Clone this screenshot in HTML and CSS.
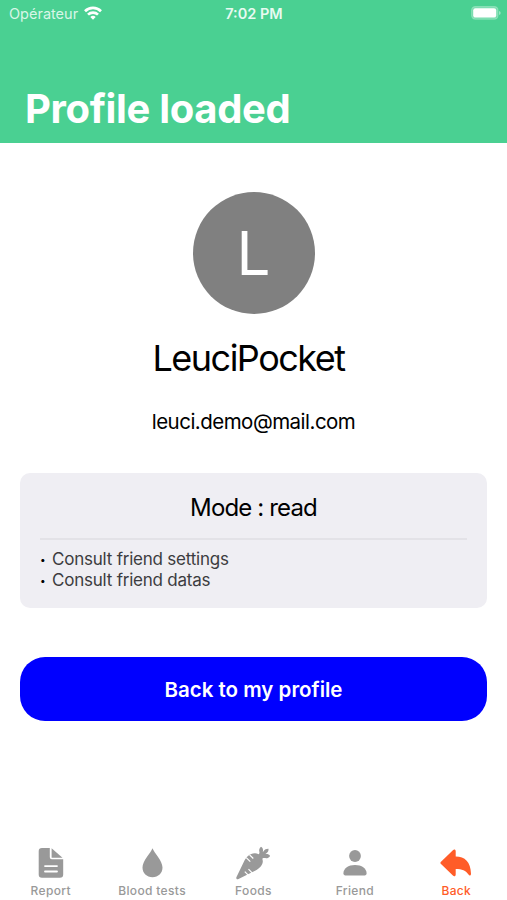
FILE: index.html
```html
<!DOCTYPE html>
<html lang="en">
<head>
  <meta charset="UTF-8" />
  <meta name="viewport" content="width=device-width, initial-scale=1.0"/>
  <title>Profile loaded</title>
  <link rel="stylesheet" href="styles.css">
</head>
<body>

  <header>
    <div class="status-bar">
      <div class="carrier">
        <span>Opérateur</span>
        <svg class="wifi" viewBox="0 0 18 14" fill="none" stroke="#fff" stroke-width="2.7">
          <path d="M1 5.2a11.5 11.5 0 0 1 16 0"/>
          <path d="M4 8.6a7.2 7.2 0 0 1 10 0"/>
          <path d="M9 13.7L6.3 11a3.9 3.9 0 0 1 5.4 0z" fill="#fff" stroke="none"/>
        </svg>
      </div>
      <span class="time">7:02 PM</span>
      <svg class="battery" viewBox="0 0 30 14">
        <rect x="0.6" y="0.6" width="26.4" height="12.6" rx="3.6" fill="#fff" fill-opacity="0.25" stroke="#fff" stroke-opacity="0.25" stroke-width="1.1"/>
        <rect x="2.2" y="2.2" width="23" height="9.4" rx="2.2" fill="#fff"/>
        <path d="M28.1 4.9q1.5.6 1.5 2t-1.5 2z" fill="#fff" fill-opacity="0.5"/>
      </svg>
    </div>
    <h1>Profile loaded</h1>
  </header>

  <main>
    <div class="avatar">L</div>
    <h2>LeuciPocket</h2>
    <p class="email">leuci.demo@mail.com</p>

    <section class="mode-card">
      <h3>Mode : read</h3>
      <ul>
        <li>Consult friend settings</li>
        <li>Consult friend datas</li>
      </ul>
    </section>

    <button class="blue">Back to my profile</button>
  </main>

  <!-- Tab bar -->
  <nav>
    <a class="tab">
      <svg viewBox="0 0 36 36">
        <path fill-rule="evenodd" d="M9 3h7.800v9.200a2 2 0 0 0 2 2h11.400v15.300a3.300 3.300 0 0 1-3.300 3.300H9a3.300 3.300 0 0 1-3.300-3.300V6.300A3.300 3.300 0 0 1 9 3zM12 20.200a.9.9 0 0 0 0 1.800h12a.9.9 0 0 0 0-1.800zM12 25.600a.9.9 0 0 0 0 1.800h12a.9.9 0 0 0 0-1.800z"/>
        <path d="M18.600 3.200l10.900 9.500H18.600z"/>
      </svg>
      <span>Report</span>
    </a>
    <a class="tab">
      <svg viewBox="0 0 36 36">
        <path d="M18.500 3.200c1.500 4.500 10 12.200 10 19.400 0 5.600-4.200 9.700-10 9.700s-10-4.100-10-9.700c0-7.200 8.500-14.900 10-19.400z"/>
      </svg>
      <span>Blood tests</span>
    </a>
    <a class="tab">
      <svg viewBox="0 0 36 36">
        <!-- root -->
        <path d="M3 34.200c-1.300.2-2-.7-1.600-1.900L9 16.500c1.900-4.600 6.400-8.600 11.100-8.300 4.500.3 7.900 3.900 7.700 8.300-.2 4-3.500 7-7.200 9z"/>
        <!-- leaves -->
        <path d="M22.800 10.200c1.400-.9 2-2 1.500-3.600-.5-2 .2-3.700 1.700-4.900 1.600 1 2.300 2.500 2 4.300l-.3 1 .9-.8c1.200-1.700 2.800-2.500 4.900-2.400.2 2.100-.6 3.600-2.300 4.700l-.8.6 1-.1c1.600 0 2.900.6 3.700 1.900-1.200 1.800-3 2.600-5.200 2.200-1.500-.3-2.700.2-3.500 1.500z"/>
        <path class="notch" d="M11.200 12.600l4.100 4.100M14.600 9.800l3.700 3.700M13.500 24.200l4.600 4.700M9.800 26.600l3.700 3.800"/>
      </svg>
      <span>Foods</span>
    </a>
    <a class="tab">
      <svg viewBox="0 0 36 36">
        <circle cx="18" cy="11" r="5.900"/>
        <path d="M6.400 28.600c0-5.300 5-8.500 11.600-8.500s11.600 3.200 11.600 8.500c0 1.100-.8 1.800-1.900 1.800H8.300c-1.100 0-1.900-.7-1.900-1.800z"/>
      </svg>
      <span>Friend</span>
    </a>
    <a class="tab active">
      <svg viewBox="0 0 36 36">
        <path d="M3 16.700L14.900 5.200c1.300-1.200 2.800-.7 2.800 1v5.300c9.300.2 14.900 5.100 15.300 17.200 0 2-1.500 2.500-2.500.9-2.600-4.300-6.400-5.700-12.800-5.700v5.500c0 1.800-1.500 2.300-2.800 1.100L3 19.100c-.8-.8-.8-1.600 0-2.400z"/>
      </svg>
      <span>Back</span>
    </a>
  </nav>

</body>
</html>
```
FILE: styles.css
```css
* {
  box-sizing: border-box;
}

body {
  font-family: Inter, 'Liberation Sans', sans-serif;
  margin: 0;
  height: 900px;
  display: flex;
  flex-direction: column;
  background-color: #fff;
  color: #000;
}

h1, h2, h3, p, ul {
  margin: 0;
  padding: 0;
  font-weight: 400;
}

header {
  height: 142.5px;
  background-color: #4ad092;
  color: #fff;
}

.status-bar {
  display: grid;
  grid-template-columns: 1fr auto 1fr;
  align-items: center;
  height: 26px;
  padding: 0 6px 0 9px;
}

.carrier {
  display: flex;
  align-items: center;
  gap: 6px;
  font-size: 14.5px;
  color: #d8f6e7;
}

.wifi {
  width: 18px;
  height: 14px;
}

.time {
  padding-right: 2px;
  font-size: 14.5px;
  font-weight: 600;
  color: #e8faf1;
}

.battery {
  width: 30px;
  height: 14px;
  justify-self: end;
}

h1 {
  padding: 58px 0 0 25px;
  font-size: 40px;
  line-height: 50px;
  font-weight: 700;
  letter-spacing: -0.35px;
}

main {
  flex: 1;
  display: flex;
  flex-direction: column;
  align-items: center;
  padding: 49px 20px 0;
}

.avatar {
  width: 122px;
  height: 122px;
  border-radius: 50%;
  background-color: #808080;
  color: #fff;
  font-size: 60px;
  line-height: 123px;
  text-align: center;
}

h2 {
  margin-top: 21px;
  padding-right: 10px;
  font-size: 36px;
  line-height: 46px;
  letter-spacing: -1.5px;
}

.email {
  margin-top: 28px;
  font-size: 20.5px;
  line-height: 26px;
  letter-spacing: -0.52px;
}

.mode-card {
  width: 467px;
  height: 135px;
  margin-top: 38px;
  padding: 14px 20px;
  border-radius: 10px;
  background-color: #efeef3;
}

h3 {
  height: 53px;
  border-bottom: 2px solid #e3e2e7;
  font-size: 24px;
  line-height: 41px;
  letter-spacing: -0.85px;
  text-align: center;
}

ul {
  padding-top: 9px;
  list-style: none;
  font-size: 17px;
  line-height: 21px;
  letter-spacing: -0.22px;
  color: #3c3c40;
}

li::before {
  content: '•';
  display: inline-block;
  width: 12px;
  font-size: 10px;
  line-height: 10px;
  vertical-align: 2px;
  color: #000;
}

button {
  width: 467px;
  height: 64px;
  margin-top: 49px;
  padding-top: 3px;
  border: none;
  border-radius: 25px;
  font-family: inherit;
  font-size: 20.5px;
  font-weight: 600;
  cursor: pointer;
}

.blue { background-color: #0000ff; color: white; }

nav {
  display: grid;
  grid-template-columns: repeat(5, 1fr);
  height: 55px;
}

.tab {
  display: flex;
  flex-direction: column;
  align-items: center;
  color: #999;
  font-size: 12px;
  font-weight: 500;
  line-height: 16px;
  letter-spacing: 0.35px;
}

.tab svg {
  width: 36px;
  height: 36px;
  margin-bottom: 2px;
  fill: currentColor;
}

.notch {
  fill: none;
  stroke: #fff;
  stroke-width: 1.2;
}

.active { color: #ff5c28; }
```
